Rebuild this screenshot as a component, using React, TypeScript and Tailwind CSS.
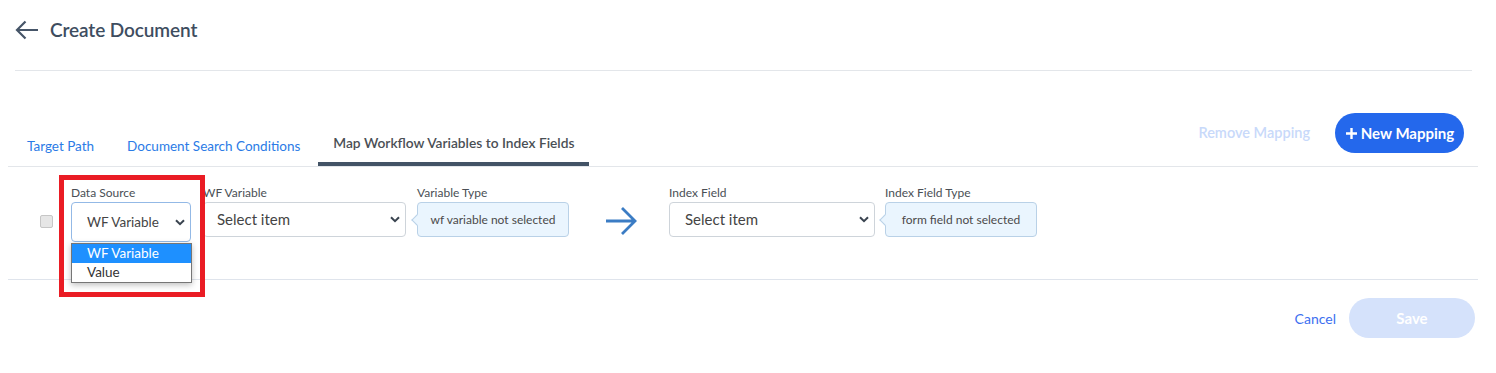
import React from "react";

const Chevron = ({ className = "" }: { className?: string }) => (
  <svg width="10" height="7" viewBox="0 0 10 7" className={className}>
    <path d="M1 1.2 L5 5.2 L9 1.2" fill="none" stroke="#3a4450" strokeWidth="2" />
  </svg>
);

const Tag = ({ text }: { text: string }) => (
  <div className="relative h-[35px] w-[152px] rounded-[4px] border border-[#b9d1e7] bg-[#eaf5fe] flex items-center justify-center text-[12px] text-[#4a4a4a]">
    <div className="absolute left-[-5px] top-[13px] h-[8px] w-[8px] rotate-45 border-b border-l border-[#b9d1e7] bg-[#eaf5fe]" />
    <span className="relative">{text}</span>
  </div>
);

export default function App() {
  return (
    <div className="relative w-[1496px] h-[373px] bg-white overflow-hidden" style={{ fontFamily: "Lato, 'Noto Sans', sans-serif" }}>
      {/* Header */}
      <div className="ml-[15px] mr-[24px]">
        <div className="h-[60px] flex items-center">
          <svg width="24" height="20" viewBox="0 0 24 20" className="mr-[11px]">
            <path d="M23 10 H2 M10.5 1.5 L2 10 L10.5 18.5" fill="none" stroke="#465568" strokeWidth="2.2" />
          </svg>
          <h1 className="text-[19px] font-semibold text-[#3e4d5f] tracking-[-0.1px]">Create Document</h1>
        </div>
        <div className="h-[10px]" />
        <div className="h-px bg-[#e3e6ea]" />
      </div>

      {/* Tabs */}
      <div className="ml-[8px] mr-[18px] h-[96px] flex items-end justify-between border-b border-[#e3e6ea]">
        <div className="flex items-end ml-[4px] gap-[3px]">
          <div className="px-[15px] pb-[12px] text-[13.5px] leading-[16px] text-[#2b7be6]">Target Path</div>
          <div className="px-[15px] pb-[12px] text-[13.5px] leading-[16px] text-[#2b7be6]">Document Search Conditions</div>
          <div className="px-[15px] pb-[11px] border-b-4 border-[#435366] text-[13.75px] leading-[16px] font-semibold text-[#4a4f55]">
            Map Workflow Variables to Index Fields
          </div>
        </div>
        <div className="flex items-center gap-[25px] pr-[14px] pb-[13px]">
          <span className="text-[14.5px] font-semibold text-[#c8d9fa]">Remove Mapping</span>
          <button className="h-[40px] w-[129px] rounded-full bg-[#2468ec] text-white text-[15px] font-bold flex items-center justify-center gap-[3px]">
            <svg width="13" height="13" viewBox="0 0 13 13">
              <path d="M6.5 1 V12 M1 6.5 H12" stroke="white" strokeWidth="2.4" />
            </svg>
            New Mapping
          </button>
        </div>
      </div>

      {/* Mapping row */}
      <div className="ml-[8px] mr-[18px] h-[113px] border-b border-[#dfe4ec] flex items-start pt-[18px]">
        <div className="ml-[32px] mt-[30px] h-[13px] w-[13px] rounded-[2px] border border-[#c6c6c6] bg-[#e6e6e6]" />
        <div className="ml-[18px] w-[120px]">
          <div className="text-[12px] leading-[16px] text-[#4a4f55] mb-[1px]">Data Source</div>
          <div className="h-[40px] rounded-[4px] border border-[#93b9e6] flex items-center justify-between pl-[15px] pr-[5px] text-[13.5px] text-[#444]">
            WF Variable
            <Chevron />
          </div>
        </div>
        <div className="ml-[12px] w-[203px]">
          <div className="text-[12px] leading-[16px] text-[#4a4f55] mb-[1px]">WF Variable</div>
          <div className="h-[35px] rounded-[4px] border border-[#ced4da] flex items-center justify-between pl-[13px] pr-[5px] text-[15px] text-[#444]">
            Select item
            <Chevron />
          </div>
        </div>
        <div className="ml-[11px] w-[152px]">
          <div className="text-[12px] leading-[16px] text-[#4a4f55] mb-[1px]">Variable Type</div>
          <Tag text="wf variable not selected" />
        </div>
        <div className="ml-[36px] mt-[21px]">
          <svg width="32" height="30" viewBox="0 0 32 30">
            <path d="M1 15 H30 M17 2 L30 15 L17 28" fill="none" stroke="#3b7cc4" strokeWidth="2.8" />
          </svg>
        </div>
        <div className="ml-[32px] w-[206px]">
          <div className="text-[12px] leading-[16px] text-[#4a4f55] mb-[1px]">Index Field</div>
          <div className="h-[35px] rounded-[4px] border border-[#ced4da] flex items-center justify-between pl-[15px] pr-[5px] text-[15px] text-[#444]">
            Select item
            <Chevron />
          </div>
        </div>
        <div className="ml-[10px] w-[152px]">
          <div className="text-[12px] leading-[16px] text-[#4a4f55] mb-[1px]">Index Field Type</div>
          <Tag text="form field not selected" />
        </div>
      </div>

      {/* Footer */}
      <div className="flex justify-end items-center pt-[18px] pr-[21px] gap-[13px]">
        <span className="text-[14px] text-[#3d6ff0]">Cancel</span>
        <button className="h-[40px] w-[126px] rounded-full bg-[#d5e2fb] text-white text-[15px] font-bold">Save</button>
      </div>

      {/* Open dropdown list */}
      <div className="absolute left-[71px] top-[243px] w-[121px] border border-[#767676] bg-white shadow-[0_2px_6px_rgba(0,0,0,0.25)] text-[13.5px] leading-[19px]">
        <div className="bg-[#1e90ff] text-white pl-[15px]">WF Variable</div>
        <div className="text-[#333] pl-[15px]">Value</div>
      </div>

      {/* Red annotation box */}
      <div className="absolute left-[59px] top-[175px] w-[146px] h-[122px] border-[5px] border-[#ea1c24]" />
    </div>
  );
}
